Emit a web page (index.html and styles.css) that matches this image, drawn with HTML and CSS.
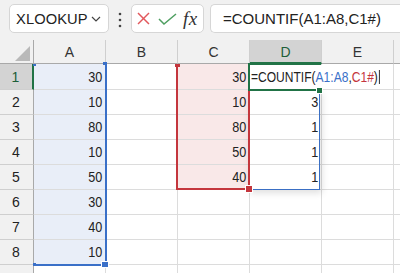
FILE: index.html
```html
<!DOCTYPE html>
<html>
<head>
<meta charset="utf-8">
<link rel="stylesheet" href="styles.css">
</head>
<body>
<div class="app">
  <div class="toolbar">
    <div class="namebox">
      <span class="nb-text">XLOOKUP</span>
      <svg class="chev" width="10" height="6" viewBox="0 0 10 6"><polyline points="1,1 5,5 9,1"/></svg>
    </div>
    <svg class="dots" width="4" height="16" viewBox="0 0 4 16"><circle cx="2" cy="2" r="1.3"/><circle cx="2" cy="8" r="1.3"/><circle cx="2" cy="14" r="1.3"/></svg>
    <div class="fxbox">
      <svg class="ico-x" width="13" height="13" viewBox="0 0 13 13"><line x1="1" y1="1" x2="12" y2="12"/><line x1="12" y1="1" x2="1" y2="12"/></svg>
      <svg class="ico-ok" width="19" height="12" viewBox="0 0 19 12"><polyline points="1,6 6,11 18,1"/></svg>
      <span class="fx">fx</span>
    </div>
    <div class="formula">=COUNTIF(A1:A8,C1#)</div>
  </div>

  <div class="sheet">
    <div class="grid">
      <div class="corner"><span class="tri"></span></div>
      <div class="ch">A</div><div class="ch">B</div><div class="ch">C</div><div class="ch sel">D</div><div class="ch">E</div><div class="ch"></div>

      <div class="rh sel">1</div><div class="c a"><span>30</span></div><div class="c"></div><div class="c p"><span>30</span></div><div class="c"></div><div class="c"></div><div class="c"></div>
      <div class="rh">2</div><div class="c a"><span>10</span></div><div class="c"></div><div class="c p"><span>10</span></div><div class="c"><span>3</span></div><div class="c"></div><div class="c"></div>
      <div class="rh">3</div><div class="c a"><span>80</span></div><div class="c"></div><div class="c p"><span>80</span></div><div class="c"><span>1</span></div><div class="c"></div><div class="c"></div>
      <div class="rh">4</div><div class="c a"><span>10</span></div><div class="c"></div><div class="c p"><span>50</span></div><div class="c"><span>1</span></div><div class="c"></div><div class="c"></div>
      <div class="rh">5</div><div class="c a"><span>50</span></div><div class="c"></div><div class="c p"><span>40</span></div><div class="c"><span>1</span></div><div class="c"></div><div class="c"></div>
      <div class="rh">6</div><div class="c a"><span>30</span></div><div class="c"></div><div class="c"></div><div class="c"></div><div class="c"></div><div class="c"></div>
      <div class="rh">7</div><div class="c a"><span>40</span></div><div class="c"></div><div class="c"></div><div class="c"></div><div class="c"></div><div class="c"></div>
      <div class="rh">8</div><div class="c a"><span>10</span></div><div class="c"></div><div class="c"></div><div class="c"></div><div class="c"></div><div class="c"></div>
      <div class="rh"></div><div class="c"></div><div class="c"></div><div class="c"></div><div class="c"></div><div class="c"></div><div class="c"></div>
    </div>

    <div class="spill"></div>
    <div class="rng-a"></div>
    <div class="h h-a-tl"></div>
    <div class="h h-a-tr"></div>
    <div class="h h-a-bl"></div>
    <div class="h h-a-br"></div>
    <div class="rng-c"></div>
    <div class="h h-c-tl"></div>
    <div class="h h-c-tr"></div>
    <div class="h h-c-br"></div>
    <div class="active"></div>
    <div class="editor"><span class="ed-text">=COUNTIF(<span class="ref-a">A1:A8</span>,<span class="ref-c">C1#</span>)<span class="caret"></span></span></div>
    <div class="fill-handle"></div>
  </div>
</div>
</body>
</html>
```

FILE: styles.css
```css
* { box-sizing: border-box; }
html, body { margin: 0; padding: 0; }
body {
  width: 400px;
  height: 273px;
  overflow: hidden;
  background: #f1f1f1;
  font-family: "Liberation Sans", Arial, sans-serif;
  color: #222;
}
.app { width: 400px; height: 273px; overflow: hidden; }

/* toolbar */
.toolbar {
  height: 40px;
  display: flex;
  align-items: flex-start;
  padding: 4px 0 0 9px;
  white-space: nowrap;
}
.namebox {
  width: 100px;
  height: 29px;
  background: #fff;
  border: 1px solid #d6d6d6;
  border-radius: 5px;
  display: flex;
  align-items: center;
  padding-left: 6px;
  font-size: 14.7px;
  color: #222;
}
.nb-text { flex: 1; letter-spacing: 0.1px; }
.chev { margin-right: 7px; margin-top: 1px; }
.chev polyline { fill: none; stroke: #444; stroke-width: 1.2; }
.dots { margin: 8px 0 0 9px; fill: #444; }
.fxbox {
  margin-left: 9px;
  width: 73px;
  height: 29px;
  background: #fff;
  border: 1px solid #d6d6d6;
  border-radius: 5px;
  display: flex;
  align-items: center;
  padding-left: 5px;
}
.ico-x line { stroke: #e2585d; stroke-width: 1.5; }
.ico-ok { margin-left: 8px; }
.ico-ok polyline { fill: none; stroke: #4f9f61; stroke-width: 1.5; }
.fx {
  margin-left: 6px;
  font-family: "Liberation Serif", "Times New Roman", serif;
  font-style: italic;
  font-size: 19px;
  color: #333;
  letter-spacing: 0.5px;
}
.formula {
  margin-left: 6px;
  flex: 1;
  height: 29px;
  background: #fff;
  border: 1px solid #d6d6d6;
  border-right: none;
  border-radius: 5px 0 0 5px;
  padding-left: 12px;
  display: flex;
  align-items: center;
  font-size: 15px;
  color: #222;
}

/* sheet */
.sheet { position: relative; height: 233px; background: #fff; overflow: hidden; }
.grid {
  display: grid;
  grid-template-columns: 34px 72px 72px 72px 72px 72px 30px;
  grid-template-rows: 24px 26px repeat(7, 25px) 25px;
}
.corner {
  background: #f1f1f1;
  border-right: 1px solid #a9a9a9;
  border-bottom: 1px solid #a9a9a9;
  position: relative;
}
.tri {
  position: absolute;
  right: 3px;
  bottom: 2px;
  width: 0;
  height: 0;
  border-left: 15px solid transparent;
  border-bottom: 15px solid #b9b9b9;
}
.ch {
  background: #f1f1f1;
  border-right: 1px solid #cfcfcf;
  border-bottom: 1px solid #a9a9a9;
  display: flex;
  align-items: center;
  justify-content: center;
  font-size: 14px;
  color: #333;
  padding-top: 1px;
}
.ch.sel {
  background: #d3d3d3;
  color: #1d5e38;
  border-bottom: 2px solid #217346;
}
.rh {
  background: #f1f1f1;
  border-right: 1px solid #a9a9a9;
  border-bottom: 1px solid #cfcfcf;
  display: flex;
  align-items: center;
  justify-content: center;
  font-size: 14px;
  color: #222;
  padding-right: 1px;
}
.rh.sel {
  background: #d3d3d3;
  color: #1d5e38;
  border-right: 2px solid #217346;
}
.c {
  border-right: 1px solid #dcdcdc;
  border-bottom: 1px solid #dcdcdc;
  display: flex;
  align-items: center;
  justify-content: flex-end;
  padding-right: 3px;
  font-size: 14.7px;
  color: #222;
}
.c span {
  display: inline-block;
  transform: scaleX(0.86);
  transform-origin: right center;
}
.c.a { background: #e9eef8; }
.c.p { background: #f9e8e8; }

/* overlays: reference highlight ranges */
.rng-a {
  position: absolute;
  left: 33px; top: 24px;
  width: 74px; height: 202px;
  border-right: 2px solid #3a70c8;
  border-bottom: 2px solid #3a70c8;
}
.rng-c {
  position: absolute;
  left: 176px; top: 24px;
  width: 74px; height: 126px;
  border-left: 2px solid #c4363d;
  border-right: 2px solid #c4363d;
  border-bottom: 2px solid #c4363d;
}
.spill {
  position: absolute;
  left: 248px; top: 50px;
  width: 72px; height: 100px;
  border-right: 1px solid #3a6fc4;
  border-bottom: 1px solid #3a6fc4;
  box-shadow: 2px 3px 7px rgba(0,0,0,0.13);
}
.h { position: absolute; }
.h-a-tl { left: 33px; top: 24px; width: 3px; height: 2px; background: #3a70c8; }
.h-a-tr { left: 103px; top: 22px; width: 4px; height: 3px; background: #3a70c8; }
.h-a-bl { left: 33px; top: 223px; width: 3px; height: 3px; background: #3a70c8; }
.h-a-br { left: 101px; top: 221px; width: 8px; height: 7px; background: #3a70c8; border: 1px solid #fff; }
.h-c-tl { left: 175px; top: 24px; width: 5px; height: 3px; background: #c4363d; }
.h-c-tr { left: 248px; top: 23px; width: 2px; height: 3px; background: #c4363d; }
.h-c-br { left: 245px; top: 145px; width: 8px; height: 8px; background: #c4363d; border: 1px solid #fff; }

.active {
  position: absolute;
  left: 248px; top: 23px;
  width: 73px; height: 28px;
  border: 2px solid #217346;
}
.editor {
  position: absolute;
  left: 250px; top: 25px;
  width: 131px;
  height: 24px;
  display: flex;
  align-items: center;
  white-space: nowrap;
  background: #fff;
  padding-left: 1px;
  font-size: 14.7px;
  color: #222;
}
.ed-text {
  display: inline-block;
  transform: scaleX(0.82);
  transform-origin: left center;
}
.ref-a { color: #3a70c8; }
.ref-c { color: #c4363d; }
.caret { display: inline-block; width: 1.3px; height: 14px; background: #000; margin-left: 1px; vertical-align: -2px; }
.fill-handle {
  position: absolute;
  left: 316px; top: 47px;
  width: 7px; height: 7px;
  background: #217346;
  border: 1px solid #fff;
}
```
